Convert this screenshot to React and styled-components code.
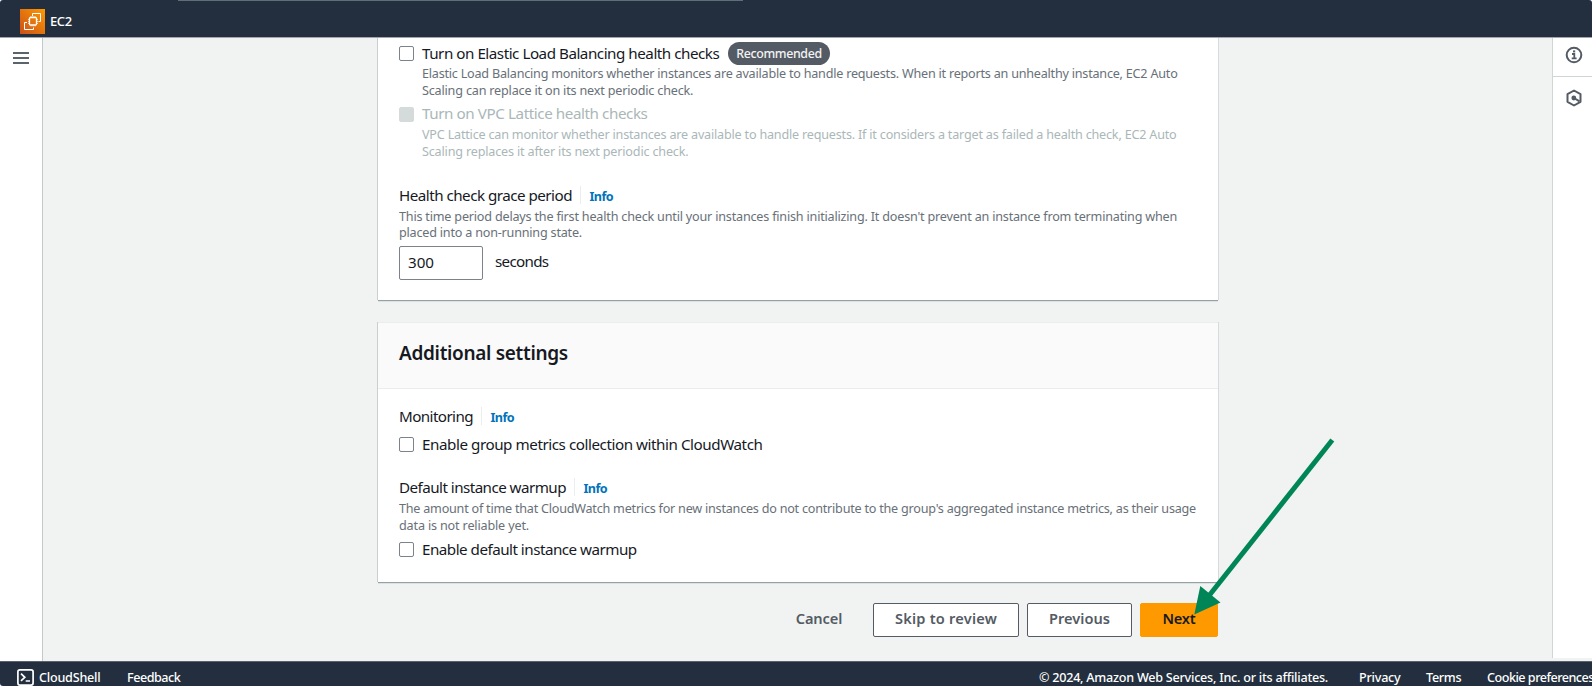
import React from 'react';
import styled, { createGlobalStyle } from 'styled-components';

const Global = createGlobalStyle`
  *, *::before, *::after { box-sizing: border-box; }
  body { margin: 0; background: #fff; }
  html, body { overflow: hidden; }
`;

const Page = styled.div`
  position: relative;
  display: flex;
  flex-direction: column;
  width: 1592px;
  height: 686px;
  overflow: hidden;
  font-family: 'Noto Sans', 'Liberation Sans', sans-serif;
  color: #16191f;
  background: #fff;
`;

const TopBar = styled.header`
  position: relative;
  flex: none;
  display: flex;
  align-items: center;
  gap: 5px;
  height: 38px;
  padding: 5px 0 0 20px;
  background: #232f3e;
  border-bottom: 1px solid #a0a6ac;
  border-radius: 3px 3px 0 0;
`;

const TopEdge = styled.span`
  position: absolute;
  top: 0;
  left: 178px;
  width: 565px;
  height: 1px;
  background: #5f6f77;
`;

const ServiceName = styled.span`
  font-size: 13px;
  font-weight: 500;
  line-height: 18px;
  letter-spacing: -0.4px;
  color: #fff;
  margin-top: -1px;
`;

const Body = styled.div`
  flex: none;
  display: flex;
  height: 623px;
  background: #f1f3f3;
`;

const LeftRail = styled.nav`
  flex: none;
  width: 43px;
  padding: 13px 0 0 13px;
  background: #fff;
  border-right: 1px solid #c3c8c9;
`;

const Menu = styled.div`
  display: flex;
  flex-direction: column;
  gap: 3px;
  width: 16px;
  padding-top: 1px;
`;

const MenuLine = styled.span`
  height: 2px;
  background: #5b636d;
`;

const RightRail = styled.aside`
  flex: none;
  width: 40px;
  height: 620px;
  background: #fff;
  border-left: 1px solid #d0d6d6;
`;

const RailItem = styled.div`
  display: flex;
  justify-content: center;
  align-items: center;
  height: ${(p) => p.$h}px;
  padding: ${(p) => p.$pad || '0'};
  border-bottom: ${(p) => (p.$line ? '1px solid #d0d6d6' : 'none')};
`;

const Content = styled.main`
  flex: 1;
  display: flex;
  flex-direction: column;
  padding-left: 335px;
`;

const Card = styled.section`
  width: 840px;
  height: ${(p) => p.$h}px;
  margin-bottom: ${(p) => p.$gap}px;
  background: #fff;
  box-shadow: 0 1px 0 0 #94a1a5, 0 2px 0 0 #dde1e1, -1px 0 0 0 #c9cfd0, 1px 0 0 0 #d5dbdb;
`;

const CardHeader = styled.div`
  height: 67px;
  padding: 16px 21px 0;
  background: #fafafa;
  border-top: 1px solid #eaeded;
  border-bottom: 1px solid #eaeded;
`;

const Title = styled.h2`
  margin: 0;
  font-size: 19px;
  font-weight: 650;
  line-height: 28px;
  letter-spacing: -0.32px;
`;

const CardBody = styled.div`
  display: flex;
  flex-direction: column;
  padding: ${(p) => p.$top}px 21px 0;
`;

const Choice = styled.div`
  display: flex;
  gap: 8px;
  margin-top: ${(p) => p.$mt || 0}px;
  color: ${(p) => (p.$off ? '#aab7b8' : '#16191f')};
`;

const Box = styled.span`
  flex: none;
  width: 15px;
  height: 15px;
  margin-top: ${(p) => (p.$off ? 5 : 4)}px;
  border: 1px solid ${(p) => (p.$off ? '#d5dbdb' : '#7a828c')};
  border-radius: 2px;
  background: ${(p) => (p.$off ? '#d5dbdb' : '#fff')};
`;

const ChoiceText = styled.div`
  display: flex;
  flex-direction: column;
`;

const Line = styled.div`
  display: flex;
  align-items: center;
  height: 22px;
  margin-top: ${(p) => p.$mt || 0}px;
`;

const Label = styled.span`
  font-size: 15.2px;
  line-height: 22px;
  letter-spacing: ${(p) => p.$ls}px;
  white-space: nowrap;
`;

const Hint = styled.span`
  font-size: 12.6px;
  line-height: 17px;
  height: ${(p) => p.$h || 17}px;
  margin-top: ${(p) => p.$mt || 0}px;
  letter-spacing: ${(p) => p.$ls}px;
  white-space: nowrap;
  color: ${(p) => (p.$off ? '#aab7b8' : '#687078')};
`;

const Badge = styled.span`
  height: 23px;
  margin: 1px 0 0 9px;
  padding: 0 8px;
  border-radius: 12px;
  background: #545b64;
  color: #f2f3f3;
  font-size: 12.4px;
  font-weight: 550;
  line-height: 23px;
  letter-spacing: -0.36px;
`;

const Info = styled.a`
  height: 18px;
  margin-left: 8px;
  padding-left: 8.5px;
  border-left: 1px solid #eaeded;
  color: #0073bb;
  font-size: 12.6px;
  font-weight: 700;
  line-height: 21px;
  letter-spacing: -0.6px;
`;

const InputRow = styled.div`
  display: flex;
  align-items: flex-start;
  gap: 12px;
  margin-top: 5px;
`;

const Field = styled.div`
  width: 84px;
  height: 34px;
  padding: 0 8px;
  border: 1px solid #7a828c;
  border-radius: 2px;
  font-size: 15.2px;
  line-height: 30px;
`;

const Unit = styled(Label)`
  margin-top: 4px;
`;

const Actions = styled.div`
  display: flex;
  width: 840px;
  justify-content: flex-end;
  gap: 8px;
`;

const Button = styled.button`
  width: ${(p) => p.$w}px;
  height: 34px;
  padding: 0 0 5px;
  border: 1px solid
    ${(p) => (p.$kind === 'primary' ? '#ff9900' : p.$kind === 'link' ? 'transparent' : '#545b64')};
  border-radius: 2px;
  background: ${(p) => (p.$kind === 'primary' ? '#ff9900' : p.$kind === 'link' ? 'transparent' : '#fff')};
  color: ${(p) => (p.$kind === 'primary' ? '#16191f' : '#545b64')};
  font-family: inherit;
  font-size: 14.6px;
  font-weight: 650;
  line-height: 26px;
  letter-spacing: ${(p) => p.$ls}px;
`;

const Footer = styled.footer`
  flex: none;
  display: flex;
  align-items: flex-start;
  height: 25px;
  padding-left: 17px;
  background: #232f3e;
  border-top: 1px solid #59636d;
  border-radius: 0 0 0 3px;
  color: #fff;
`;

const FooterText = styled.span`
  margin: 7px 0 0 ${(p) => p.$ml || 0}px;
  font-size: 12.6px;
  font-weight: 500;
  line-height: 18px;
  letter-spacing: ${(p) => p.$ls}px;
  width: ${(p) => p.$w}px;
  flex: none;
  white-space: nowrap;
`;

const ShellIcon = styled.svg`
  flex: none;
  margin-top: 7px;
`;

const Arrow = styled.svg`
  position: absolute;
  left: 1190px;
  top: 435px;
`;

function Ec2Logo() {
  return (
    <svg width="25" height="25" viewBox="0 0 25 25">
      <defs>
        <linearGradient id="g" x1="0" y1="1" x2="1" y2="0">
          <stop offset="0" stopColor="#c8511b" />
          <stop offset="1" stopColor="#ff9900" />
        </linearGradient>
      </defs>
      <rect width="25" height="25" fill="url(#g)" />
      <g fill="none" stroke="#fff" strokeWidth="1">
        <path d="M12.5 7V4.5H20.5V12.5H18.5" />
        <path d="M7 13.5H4.5V20.5H13.5V18.5" />
        <rect x="9.5" y="8.5" width="7" height="7.5" rx="1" strokeWidth="1.3" />
        <path
          d="M11 7V8.5M13 7V8.5M15 7V8.5M11 16V17.5M13 16V17.5M15 16V17.5M8 10.4H9.5M8 12.4H9.5M8 14.4H9.5M16.5 10.4H18M16.5 12.4H18M16.5 14.4H18"
          strokeWidth="0.7"
        />
      </g>
    </svg>
  );
}

export default function App() {
  return (
    <>
      <Global />
      <Page>
        <TopBar>
          <TopEdge />
          <Ec2Logo />
          <ServiceName>EC2</ServiceName>
        </TopBar>
        <Body>
          <LeftRail>
            <Menu>
              <MenuLine />
              <MenuLine />
              <MenuLine />
            </Menu>
          </LeftRail>
          <Content>
            <Card $h={262} $gap={22}>
              <CardBody $top={4}>
                <Choice>
                  <Box />
                  <ChoiceText>
                    <Line>
                      <Label $ls={-0.475}>Turn on Elastic Load Balancing health checks</Label>
                      <Badge>Recommended</Badge>
                    </Line>
                    <Hint $mt={1} $ls={-0.217}>
                      Elastic Load Balancing monitors whether instances are available to handle requests. When it reports an unhealthy instance, EC2 Auto
                    </Hint>
                    <Hint $ls={-0.18}>Scaling can replace it on its next periodic check.</Hint>
                  </ChoiceText>
                </Choice>
                <Choice $mt={3} $off>
                  <Box $off />
                  <ChoiceText>
                    <Line>
                      <Label $ls={-0.42}>Turn on VPC Lattice health checks</Label>
                    </Line>
                    <Hint $off $mt={2} $ls={-0.196}>
                      VPC Lattice can monitor whether instances are available to handle requests. If it considers a target as failed a health check, EC2 Auto
                    </Hint>
                    <Hint $off $ls={-0.17}>Scaling replaces it after its next periodic check.</Hint>
                  </ChoiceText>
                </Choice>
                <Line $mt={24}>
                  <Label $ls={-0.517}>Health check grace period</Label>
                  <Info>Info</Info>
                </Line>
                <Hint $mt={2} $h={16} $ls={-0.194}>
                  This time period delays the first health check until your instances finish initializing. It doesn't prevent an instance from terminating when
                </Hint>
                <Hint $ls={-0.205}>placed into a non-running state.</Hint>
                <InputRow>
                  <Field>300</Field>
                  <Unit $ls={-0.7}>seconds</Unit>
                </InputRow>
              </CardBody>
            </Card>
            <Card $h={260} $gap={21}>
              <CardHeader>
                <Title>Additional settings</Title>
              </CardHeader>
              <CardBody $top={16}>
                <Line>
                  <Label $ls={-0.586}>Monitoring</Label>
                  <Info>Info</Info>
                </Line>
                <Choice $mt={6}>
                  <Box />
                  <ChoiceText>
                    <Label $ls={-0.445}>Enable group metrics collection within CloudWatch</Label>
                  </ChoiceText>
                </Choice>
                <Line $mt={21}>
                  <Label $ls={-0.546}>Default instance warmup</Label>
                  <Info>Info</Info>
                </Line>
                <Hint $mt={2} $ls={-0.223}>
                  The amount of time that CloudWatch metrics for new instances do not contribute to the group's aggregated instance metrics, as their usage
                </Hint>
                <Hint $ls={-0.157}>data is not reliable yet.</Hint>
                <Choice $mt={4}>
                  <Box />
                  <ChoiceText>
                    <Label $ls={-0.51}>Enable default instance warmup</Label>
                  </ChoiceText>
                </Choice>
              </CardBody>
            </Card>
            <Actions>
              <Button $kind="link" $w={92} $ls={-0.1}>Cancel</Button>
              <Button $w={146} $ls={0.2}>Skip to review</Button>
              <Button $w={105} $ls={0}>Previous</Button>
              <Button $kind="primary" $w={78} $ls={-0.2}>Next</Button>
            </Actions>
          </Content>
          <RightRail>
            <RailItem $h={39} $line $pad="0 0 4px 2px">
              <svg width="18" height="18" viewBox="0 0 18 18" fill="none" stroke="#545b64" strokeWidth="2">
                <circle cx="9" cy="9" r="7.3" />
                <path d="M7 8H9.3V12.4M6.7 12.4H11.6" strokeWidth="1.8" />
                <path d="M8 5.4H10.2" />
              </svg>
            </RailItem>
            <RailItem $h={42} $pad="0 0 0 2px">
              <svg width="18" height="18" viewBox="0 0 18 18" fill="none" stroke="#545b64" strokeWidth="2" strokeLinejoin="round">
                <path d="M9 1.5L15.5 5.2V12.8L9 16.5L2.5 12.8V5.2Z" />
                <circle cx="8.8" cy="9" r="2.4" fill="#545b64" stroke="none" />
                <path d="M9 9L14.5 12.3" />
              </svg>
            </RailItem>
          </RightRail>
        </Body>
        <Footer>
          <ShellIcon width="17" height="17" viewBox="0 0 17 17" fill="none" stroke="#fff" strokeWidth="1.7">
            <rect x="0.9" y="0.9" width="15.2" height="15.2" rx="2" />
            <path d="M4 4.7L7.8 8.3L4 11.9M8.7 12H13" />
          </ShellIcon>
          <FooterText $ml={5} $w={88} $ls={-0.22}>CloudShell</FooterText>
          <FooterText $w={912} $ls={-0.48}>Feedback</FooterText>
          <FooterText $w={320} $ls={-0.241}>© 2024, Amazon Web Services, Inc. or its affiliates.</FooterText>
          <FooterText $w={67} $ls={-0.228}>Privacy</FooterText>
          <FooterText $w={61} $ls={-0.3}>Terms</FooterText>
          <FooterText $w={120} $ls={-0.5}>Cookie preferences</FooterText>
        </Footer>
        <Arrow width="150" height="185" viewBox="1190 435 150 185">
          <path d="M1332.3 440L1208 597" stroke="#008556" strokeWidth="5" />
          <path d="M1194.3 614.5L1200.3 586L1220.5 602.5Z" fill="#008556" />
        </Arrow>
      </Page>
    </>
  );
}
